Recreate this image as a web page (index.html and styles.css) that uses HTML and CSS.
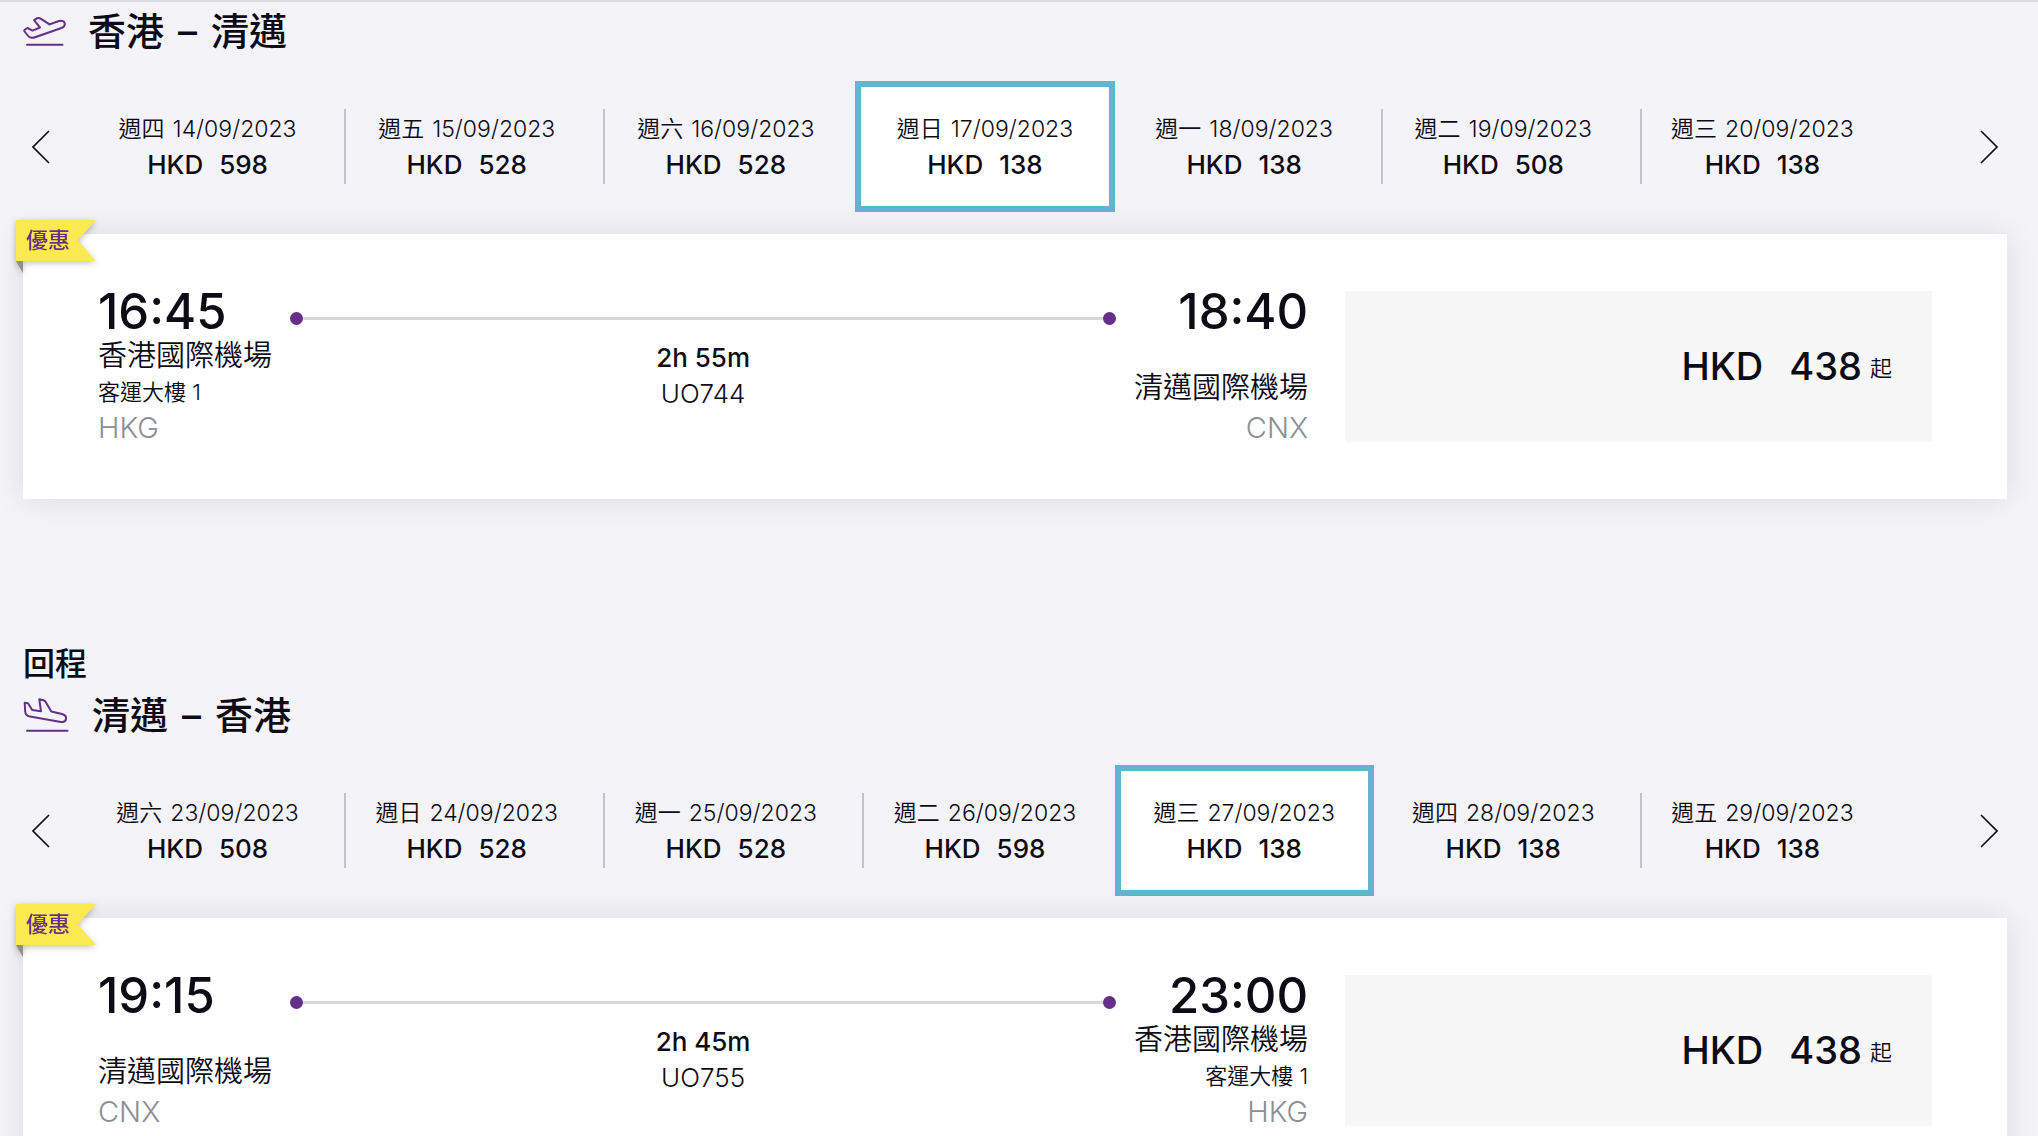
FILE: index.html
```
<!DOCTYPE html>
<html lang="zh-Hant">
<head>
  <meta charset="UTF-8" />
  <meta name="viewport" content="width=device-width, initial-scale=1.0" />
  <title>選擇航班</title>
  <link rel="stylesheet" href="styles.css">
</head>
<body>
  <main class="flights">
    <section class="journey">
      <h2 class="route">
        <svg class="route-icon" viewBox="0 0 46 40" aria-hidden="true">
          <path d="M1.6 22.5 Q0.8 21 2.2 20.3 L4.5 19 L9.5 21.6 L17 18.5 L11 11.2 L14 9.3 Q16 8.5 18 9.8 L26.5 15.4 L36 12 C39 11 41.6 12.4 41.8 14.6 C42 16.6 40.6 18.1 38.5 19 L12 28.3 C9 29.3 6.8 29 5.2 27 Z" />
          <path d="M4 35.7 H39.5" />
        </svg>
        <span class="cities"><span>香港</span><span>–</span><span>清邁</span></span>
      </h2>

      <div class="date-strip">
        <button class="arrow" aria-label="上一頁"><svg viewBox="0 0 20 36"><path d="M18 2 L2 18 L18 34" /></svg></button>
        <div class="dates">
          <button class="date"><span class="day"><span>週四</span><span>14/09/2023</span></span><span class="fare"><span>HKD</span><span>598</span></span></button>
          <button class="date"><span class="day"><span>週五</span><span>15/09/2023</span></span><span class="fare"><span>HKD</span><span>528</span></span></button>
          <button class="date"><span class="day"><span>週六</span><span>16/09/2023</span></span><span class="fare"><span>HKD</span><span>528</span></span></button>
          <button class="date selected"><span class="day"><span>週日</span><span>17/09/2023</span></span><span class="fare"><span>HKD</span><span>138</span></span></button>
          <button class="date"><span class="day"><span>週一</span><span>18/09/2023</span></span><span class="fare"><span>HKD</span><span>138</span></span></button>
          <button class="date"><span class="day"><span>週二</span><span>19/09/2023</span></span><span class="fare"><span>HKD</span><span>508</span></span></button>
          <button class="date"><span class="day"><span>週三</span><span>20/09/2023</span></span><span class="fare"><span>HKD</span><span>138</span></span></button>
        </div>
        <button class="arrow next" aria-label="下一頁"><svg viewBox="0 0 20 36"><path d="M2 2 L18 18 L2 34" /></svg></button>
      </div>

      <article class="flight-card">
        <div class="badge"><span class="badge-label">優惠</span></div>
        <div class="details">
          <div class="stop">
            <div class="time">16:45</div>
            <div class="place">
              <div class="airport">香港國際機場</div>
              <div class="terminal">客運大樓 1</div>
              <div class="code">HKG</div>
            </div>
          </div>
          <div class="path">
            <div class="line"></div>
            <div class="duration">2h 55m</div>
            <div class="flight-no">UO744</div>
          </div>
          <div class="stop arrival">
            <div class="time">18:40</div>
            <div class="place">
              <div class="airport">清邁國際機場</div>
              <div class="code">CNX</div>
            </div>
          </div>
        </div>
        <button class="price"><span class="amount"><span>HKD</span><span>438</span></span><span class="from">起</span></button>
      </article>
    </section>

    <section class="journey">
      <p class="leg">回程</p>
      <h2 class="route return">
        <svg class="route-icon" viewBox="0 0 46 40" aria-hidden="true">
          <path d="M1.7 9.7 L5 10.2 L9.2 17 L18 18.3 L16.3 6.3 L20.5 7.2 Q22 7.6 22.7 9 L28.3 18.6 L39 21 C42 21.9 43.4 23.8 43 26 C42.5 28.4 40.6 29.3 38 28.9 L7 23.6 C4 22.9 2.4 21 2.2 18.5 Z" />
          <path d="M4 37.7 H44.5" />
        </svg>
        <span class="cities"><span>清邁</span><span>–</span><span>香港</span></span>
      </h2>

      <div class="date-strip">
        <button class="arrow" aria-label="上一頁"><svg viewBox="0 0 20 36"><path d="M18 2 L2 18 L18 34" /></svg></button>
        <div class="dates">
          <button class="date"><span class="day"><span>週六</span><span>23/09/2023</span></span><span class="fare"><span>HKD</span><span>508</span></span></button>
          <button class="date"><span class="day"><span>週日</span><span>24/09/2023</span></span><span class="fare"><span>HKD</span><span>528</span></span></button>
          <button class="date"><span class="day"><span>週一</span><span>25/09/2023</span></span><span class="fare"><span>HKD</span><span>528</span></span></button>
          <button class="date"><span class="day"><span>週二</span><span>26/09/2023</span></span><span class="fare"><span>HKD</span><span>598</span></span></button>
          <button class="date selected"><span class="day"><span>週三</span><span>27/09/2023</span></span><span class="fare"><span>HKD</span><span>138</span></span></button>
          <button class="date"><span class="day"><span>週四</span><span>28/09/2023</span></span><span class="fare"><span>HKD</span><span>138</span></span></button>
          <button class="date"><span class="day"><span>週五</span><span>29/09/2023</span></span><span class="fare"><span>HKD</span><span>138</span></span></button>
        </div>
        <button class="arrow next" aria-label="下一頁"><svg viewBox="0 0 20 36"><path d="M2 2 L18 18 L2 34" /></svg></button>
      </div>

      <article class="flight-card">
        <div class="badge"><span class="badge-label">優惠</span></div>
        <div class="details">
          <div class="stop">
            <div class="time">19:15</div>
            <div class="place">
              <div class="airport">清邁國際機場</div>
              <div class="code">CNX</div>
            </div>
          </div>
          <div class="path">
            <div class="line"></div>
            <div class="duration">2h 45m</div>
            <div class="flight-no">UO755</div>
          </div>
          <div class="stop arrival">
            <div class="time">23:00</div>
            <div class="place">
              <div class="airport">香港國際機場</div>
              <div class="terminal">客運大樓 1</div>
              <div class="code">HKG</div>
            </div>
          </div>
        </div>
        <button class="price"><span class="amount"><span>HKD</span><span>438</span></span><span class="from">起</span></button>
      </article>
    </section>
  </main>
</body>
</html>
```
FILE: styles.css
```
:root {
  --bg: #f3f3f8;
  --text: #0d0c16;
  --muted: #8c8f98;
  --purple: #662f88;
  --blue: #62b5d2;
  --yellow: #fae94f;
  --line: #d8d8d8;
}

* {
  margin: 0;
  padding: 0;
  box-sizing: border-box;
}

html {
  scrollbar-width: none;
}

body {
  background: var(--bg);
  color: var(--text);
  font-family: Inter, 'Noto Sans CJK TC', sans-serif;
}

button {
  background: none;
  border: none;
  color: inherit;
  font: inherit;
  cursor: pointer;
}

.flights {
  border-top: 2px solid #dcdce0;
  padding: 0 31px 0 23px;
}

.journey {
  margin-bottom: 143px;
}

.leg {
  font-size: 32px;
  font-weight: 500;
  line-height: 44px;
}

.route {
  display: flex;
  align-items: center;
  gap: 19px;
  height: 53px;
  font-size: 38px;
  font-weight: 500;
}

.route.return {
  gap: 23px;
}

.cities {
  display: flex;
  align-items: baseline;
  gap: 14px;
}

.route-icon {
  width: 46px;
  height: 40px;
  fill: none;
  stroke: var(--purple);
  stroke-width: 2;
  stroke-linejoin: round;
  stroke-linecap: round;
}

/* date picker */
.date-strip {
  display: grid;
  grid-template-columns: 55px 1fr 115px;
  align-items: center;
  margin: 26px 0 22px;
}

.arrow {
  display: flex;
  padding-left: 8px;
}

.arrow.next {
  justify-content: flex-end;
  padding: 0 8px 0 0;
}

.arrow svg {
  width: 20px;
  height: 36px;
  fill: none;
  stroke: var(--text);
  stroke-width: 1.7;
}

.dates {
  display: grid;
  grid-template-columns: repeat(7, 1fr);
}

.date {
  position: relative;
  display: flex;
  flex-direction: column;
  align-items: center;
  justify-content: center;
  height: 131px;
  border: 6px solid transparent;
}

.date::after {
  content: '';
  position: absolute;
  top: 22px;
  right: -15px;
  width: 2px;
  height: 75px;
  background: #c2c2c9;
}

.date:last-child::after,
.date.selected::after {
  display: none;
}

.date.selected {
  background: #fff;
  border-color: var(--blue);
}

.day {
  display: flex;
  gap: 8px;
  font-size: 23px;
  font-weight: 350;
  line-height: 36px;
}

.fare {
  display: flex;
  gap: 16px;
  font-size: 26px;
  font-weight: 500;
  line-height: 36px;
}

/* flight card */
.flight-card {
  position: relative;
  display: grid;
  grid-template-columns: 1fr 32%;
  gap: 37px;
  padding: 57px 75px 51px;
  background: #fff;
  box-shadow: 0 0 30px rgba(0, 0, 0, 0.1);
}

.badge {
  position: absolute;
  top: -14px;
  left: -7px;
  filter: drop-shadow(0 2px 3px rgba(0, 0, 0, 0.25));
}

.badge::after {
  content: '';
  position: absolute;
  top: 100%;
  left: 0;
  width: 7px;
  height: 12px;
  background: #8f8f8f;
  clip-path: polygon(0 0, 100% 0, 100% 100%);
}

.badge-label {
  display: block;
  width: 80px;
  padding-left: 10px;
  background: var(--yellow);
  color: var(--purple);
  font-size: 22px;
  font-weight: 500;
  line-height: 41px;
  clip-path: polygon(0 0, 100% 0, 77% 50%, 100% 100%, 0 100%);
}

.details {
  display: grid;
  grid-template-columns: auto 1fr auto;
  gap: 18px;
}

.stop {
  display: flex;
  flex-direction: column;
  justify-content: space-between;
  min-height: 157px;
}

.arrival {
  text-align: right;
}

.time {
  font-size: 49px;
  font-weight: 500;
  line-height: 42px;
}

.airport {
  font-size: 29px;
  font-weight: 350;
  line-height: 40px;
}

.terminal {
  font-size: 22px;
  font-weight: 350;
  line-height: 32px;
}

.code {
  color: var(--muted);
  font-size: 29px;
  font-weight: 300;
  line-height: 40px;
}

.path {
  padding-top: 21px;
  text-align: center;
}

.line {
  display: flex;
  align-items: center;
  justify-content: space-between;
  height: 13px;
  margin-bottom: 15px;
  background: linear-gradient(var(--line), var(--line)) center / 100% 3px no-repeat;
}

.line::before,
.line::after {
  content: '';
  width: 13px;
  height: 13px;
  border-radius: 50%;
  background: var(--purple);
}

.duration {
  font-size: 26px;
  font-weight: 500;
  line-height: 36px;
}

.flight-no {
  font-size: 26px;
  font-weight: 300;
  line-height: 36px;
}

.price {
  display: flex;
  align-items: center;
  align-self: start;
  justify-content: flex-end;
  gap: 8px;
  height: 151px;
  padding: 0 40px 2px 0;
  background: #f7f7f7;
}

.amount {
  display: flex;
  gap: 26px;
  font-size: 38px;
  font-weight: 500;
}

.from {
  font-family: 'Noto Sans CJK TC', sans-serif;
  font-size: 22px;
  font-weight: 350;
}
```
